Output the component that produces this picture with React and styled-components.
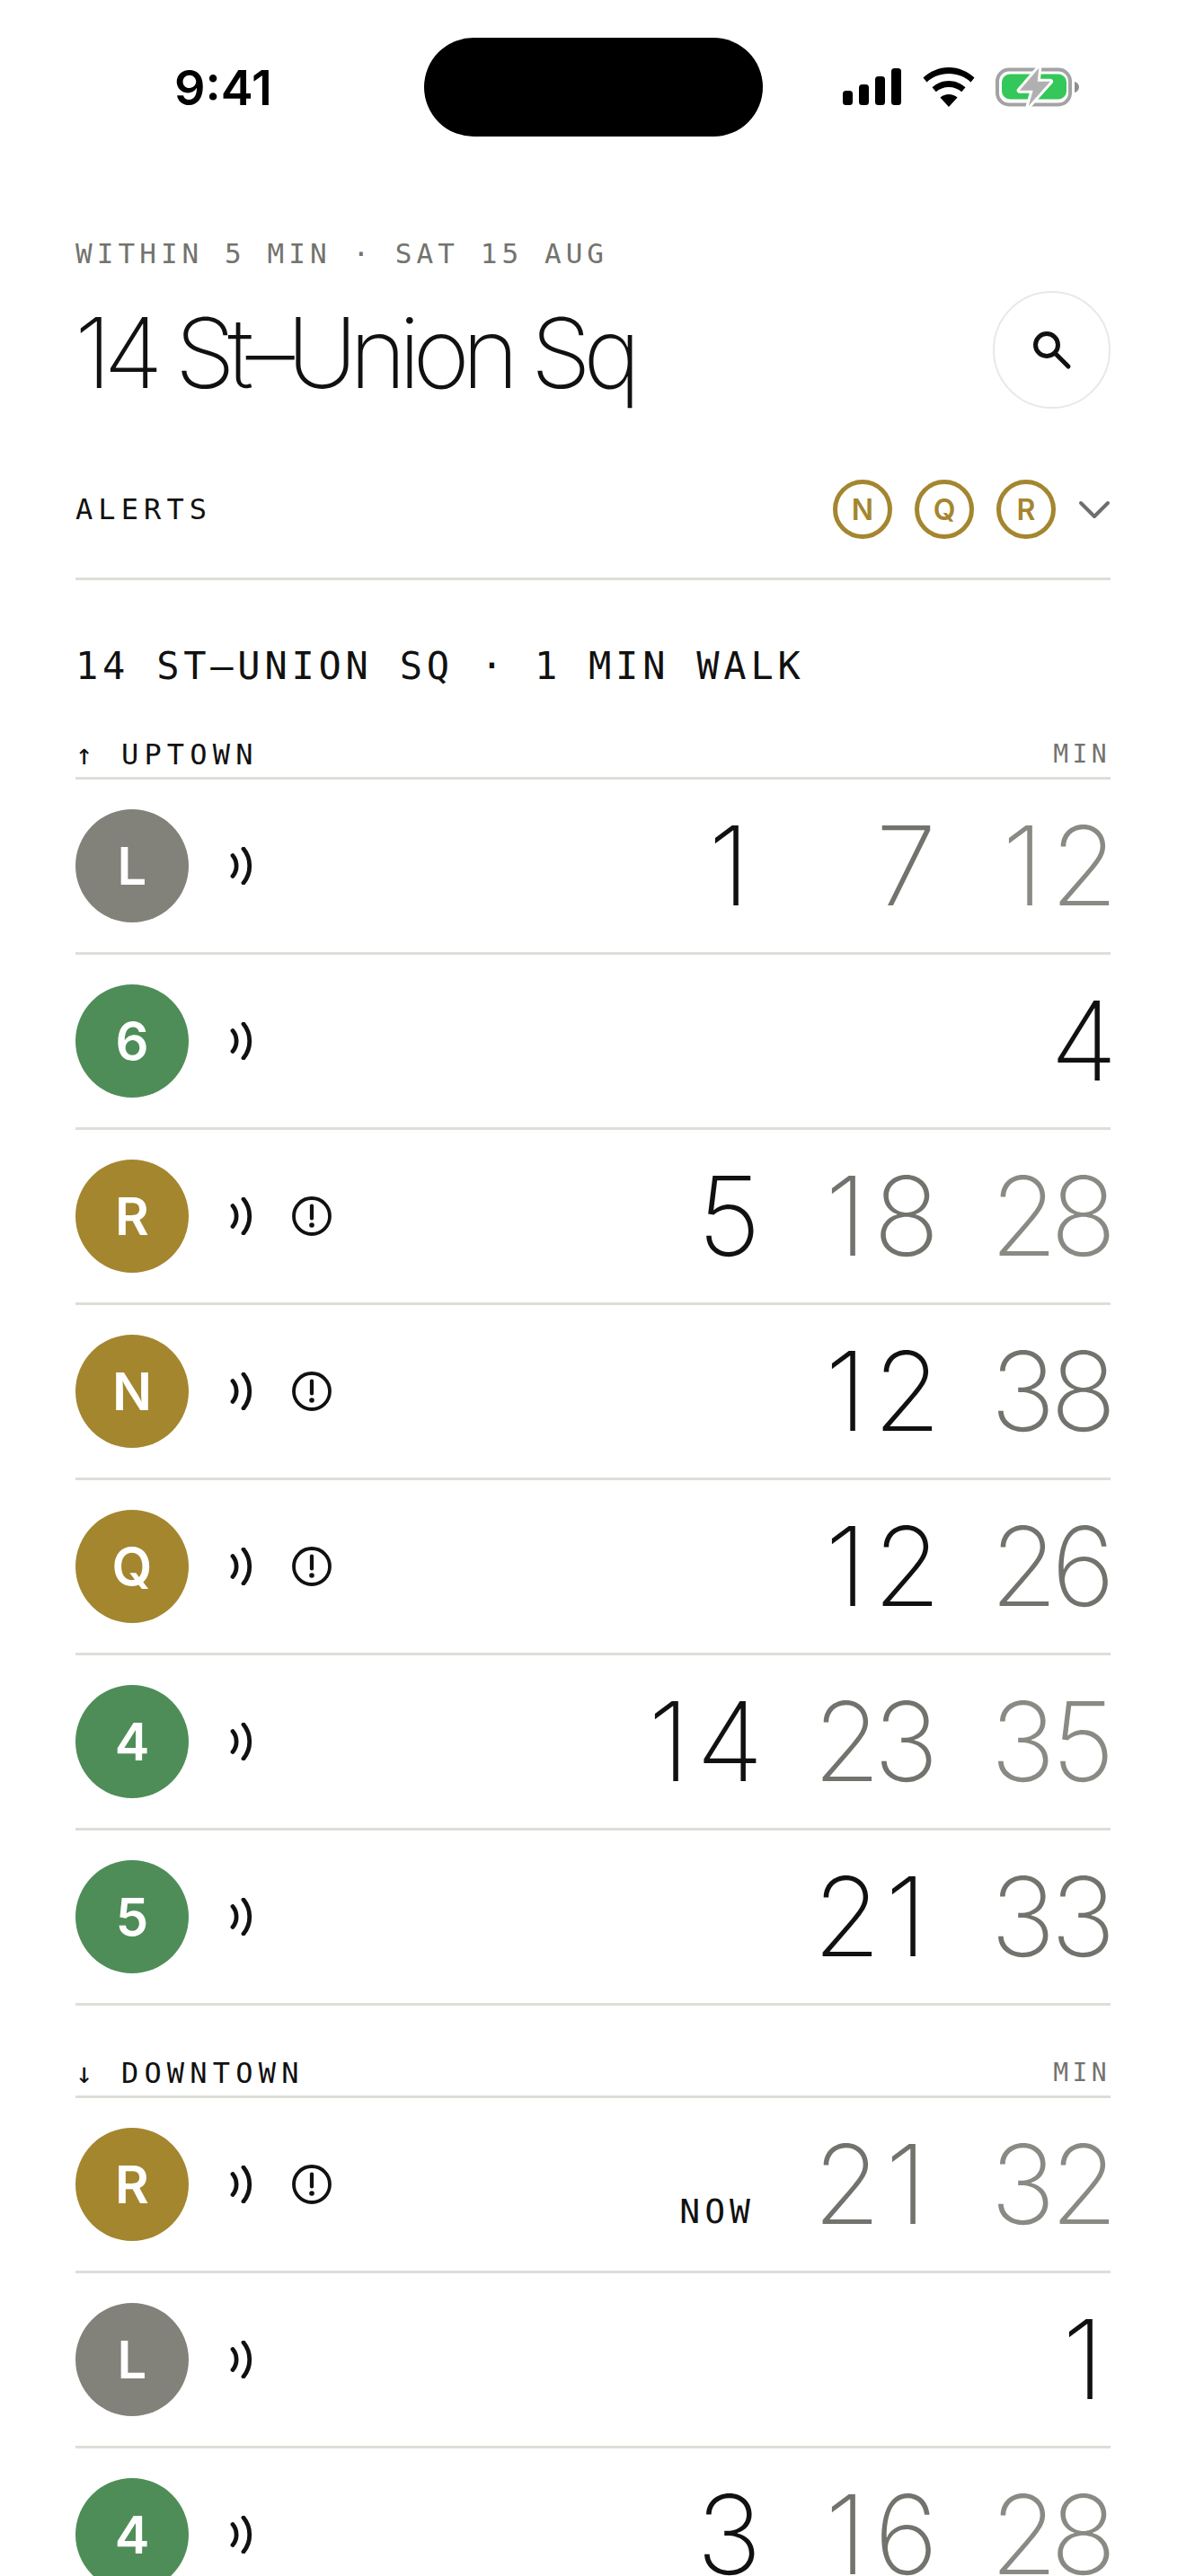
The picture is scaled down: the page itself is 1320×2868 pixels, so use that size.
import styled, { createGlobalStyle } from 'styled-components'

const GOLD = '#a4862f'
const GREEN = '#4e8d58'
const GREY = '#82827a'
const TONES = ['#111', '#73736e', '#8a8a84']

const uptown = [
  { line: 'L', color: GREY, times: ['1', '7', '12'] },
  { line: '6', color: GREEN, times: ['4'] },
  { line: 'R', color: GOLD, alert: true, times: ['5', '18', '28'] },
  { line: 'N', color: GOLD, alert: true, times: ['12', '38'] },
  { line: 'Q', color: GOLD, alert: true, times: ['12', '26'] },
  { line: '4', color: GREEN, times: ['14', '23', '35'] },
  { line: '5', color: GREEN, times: ['21', '33'] },
]

const downtown = [
  { line: 'R', color: GOLD, alert: true, times: ['NOW', '21', '32'] },
  { line: 'L', color: GREY, times: ['1'] },
  { line: '4', color: GREEN, times: ['3', '16', '28'] },
]

function Live() {
  return (
    <svg width="28" height="42" viewBox="0 0 28 42" fill="none" stroke="#111" strokeWidth="4.800" strokeLinecap="round">
      <path d="M3 9.500c5.500 6.500 5.500 16.500 0 23" />
      <path d="M15 2c9 11 9 27 0 38" />
    </svg>
  )
}

function Alert() {
  return (
    <svg width="46" height="46" viewBox="0 0 46 46" fill="none">
      <circle cx="23" cy="23" r="20" stroke="#111" strokeWidth="3.800" />
      <path d="M23 11.500v14" stroke="#111" strokeWidth="4.200" strokeLinecap="round" />
      <circle cx="23" cy="33" r="2.800" fill="#111" />
    </svg>
  )
}

function TrainRow({ train }) {
  return (
    <Row>
      <Bullet color={train.color}>{train.line}</Bullet>
      <Icons>
        <Live />
        {train.alert ? <Alert /> : null}
      </Icons>
      <Times>
        {train.times.map((time, i) => (
          time === 'NOW'
            ? <Now key={i}>NOW</Now>
            : (
              <Time key={i} color={TONES[i]}>
                {time.split('').map((digit, d) => <Digit key={d}>{digit}</Digit>)}
              </Time>
            )
        ))}
      </Times>
    </Row>
  )
}

export default function App() {
  return (
    <Screen>
      <GlobalStyle />
      <StatusBar>
        <Clock>9:41</Clock>
        <Island />
        <StatusIcons>
          <svg width="66" height="42" viewBox="0 0 66 42" fill="#000">
            <rect x="0" y="25" width="11" height="16" rx="3.500" />
            <rect x="18" y="18" width="11" height="23" rx="3.500" />
            <rect x="36" y="9" width="11" height="32" rx="3.500" />
            <rect x="54" y="0" width="11" height="41" rx="3.500" />
          </svg>
          <svg width="58" height="44" viewBox="0 0 58 44" fill="#000">
            <path d="M29 0c11 0 21 4.500 28.500 11.500l-4 5C47 10.500 38.500 7 29 7S11 10.500 4.500 16.500l-4-5C8 4.500 18 0 29 0z" />
            <path d="M29 15c7 0 13.500 2.800 18.500 7.300l-4.300 5C39.500 24 34.500 22 29 22s-10.500 2-14.200 5.300l-4.300-5C15.500 17.800 22 15 29 15z" />
            <path d="M29 30c3.600 0 7 1.300 9.600 3.600L29 44l-9.600-10.400C22 31.300 25.400 30 29 30z" />
          </svg>
          <svg width="94" height="46" viewBox="0 0 94 46" fill="none">
            <rect x="2" y="3.500" width="81" height="39" rx="13" stroke="#a3a3a3" strokeWidth="4" />
            <rect x="7" y="8.500" width="72" height="28" rx="9" fill="#34c759" />
            <path d="M88 17c3 .7 5 3 5 6s-2 5.300-5 6z" fill="#8e8e8e" />
            <path d="M48.300 1.700L26.700 26.700h15L36.700 44 61 16.700H46.700z" fill="#b0b0b0" stroke="#fff" strokeWidth="6" paintOrder="stroke" strokeLinejoin="round" />
          </svg>
        </StatusIcons>
      </StatusBar>

      <Header>
        <div>
          <Eyebrow>WITHIN 5 MIN · SAT 15 AUG</Eyebrow>
          <Title>14 St–Union Sq</Title>
        </div>
        <SearchButton>
          <svg width="46" height="46" viewBox="0 0 46 46" fill="none" stroke="#111" strokeWidth="5">
            <circle cx="17" cy="17" r="12.500" />
            <path d="M26.500 26.500L41 41" strokeLinecap="round" />
          </svg>
        </SearchButton>
      </Header>

      <Alerts>
        <AlertsLabel>ALERTS</AlertsLabel>
        <AlertBadges>
          <Badge>N</Badge>
          <Badge>Q</Badge>
          <Badge>R</Badge>
          <svg width="36" height="22" viewBox="0 0 36 22" fill="none" stroke="#6e6e6a" strokeWidth="4" strokeLinecap="round" strokeLinejoin="round">
            <path d="M3 4l15 15L33 4" />
          </svg>
        </AlertBadges>
      </Alerts>

      <Station>14 ST–UNION SQ · 1 MIN WALK</Station>

      <Direction gap="48px">
        <DirectionName>↑ UPTOWN</DirectionName>
        <MinLabel>MIN</MinLabel>
      </Direction>
      {uptown.map((train, i) => <TrainRow key={i} train={train} />)}

      <Direction gap="53px">
        <DirectionName>↓ DOWNTOWN</DirectionName>
        <MinLabel>MIN</MinLabel>
      </Direction>
      {downtown.map((train, i) => <TrainRow key={i} train={train} />)}
    </Screen>
  )
}

const GlobalStyle = createGlobalStyle`
  html, body {
    margin: 0;
    padding: 0;
    background: #fff;
  }
`
const Screen = styled.div`
  width: 1320px;
  height: 2868px;
  overflow: hidden;
  padding: 42px 84px 0;
  box-sizing: border-box;
  background: #fff;
  color: #111;
  font-family: Inter, sans-serif;
`
const StatusBar = styled.div`
  display: flex;
  align-items: center;
  height: 110px;
`
const Clock = styled.div`
  width: 388px;
  padding-left: 110px;
  box-sizing: border-box;
  font-size: 54px;
  font-weight: 600;
  color: #000;
`
const Island = styled.div`
  width: 377px;
  height: 110px;
  border-radius: 55px;
  background: #000;
`
const StatusIcons = styled.div`
  display: flex;
  align-items: center;
  gap: 23px;
  margin-left: 89px;
`
const Header = styled.div`
  display: flex;
  justify-content: space-between;
  align-items: flex-start;
  margin-top: 110px;
`
const Eyebrow = styled.div`
  font-family: "DejaVu Sans Mono", monospace;
  font-size: 31px;
  letter-spacing: 5.060px;
  color: #73736e;
  line-height: 40px;
`
const Title = styled.h1`
  margin: 36px 0 0 -1px;
  font-size: 108px;
  font-weight: 180;
  letter-spacing: -8.600px;
  line-height: 110px;
  color: #111;
`
const SearchButton = styled.div`
  display: flex;
  align-items: center;
  justify-content: center;
  width: 131px;
  height: 131px;
  margin-top: 62px;
  box-sizing: border-box;
  border: 2.500px solid #e8e8e6;
  border-radius: 50%;
`
const Alerts = styled.div`
  display: flex;
  justify-content: space-between;
  align-items: center;
  height: 145px;
  margin-top: 46px;
  padding-bottom: 10px;
  box-sizing: border-box;
  border-bottom: 3px solid #deded9;
`
const AlertsLabel = styled.div`
  font-family: "DejaVu Sans Mono", monospace;
  font-size: 32px;
  letter-spacing: 6.100px;
`
const AlertBadges = styled.div`
  display: flex;
  align-items: center;
  gap: 25px;
`
const Badge = styled.div`
  display: flex;
  align-items: center;
  justify-content: center;
  width: 66px;
  height: 66px;
  box-sizing: border-box;
  border: 5.500px solid ${GOLD};
  border-radius: 50%;
  color: ${GOLD};
  font-size: 32px;
  font-weight: 600;
`
const Station = styled.div`
  margin-top: 68px;
  font-family: "DejaVu Sans Mono", monospace;
  font-size: 42px;
  letter-spacing: 4.770px;
  line-height: 56px;
  white-space: nowrap;
`
const Direction = styled.div`
  display: flex;
  justify-content: space-between;
  align-items: flex-end;
  height: 50px;
  margin-top: ${props => props.gap};
  padding-bottom: 5px;
  box-sizing: border-box;
  border-bottom: 3px solid #deded9;
  font-family: "DejaVu Sans Mono", monospace;
  line-height: 40px;
`
const DirectionName = styled.div`
  font-size: 32px;
  letter-spacing: 6.200px;
`
const MinLabel = styled.div`
  font-size: 28px;
  letter-spacing: 4.400px;
  color: #73736e;
`
const Row = styled.div`
  display: flex;
  align-items: center;
  height: 195px;
  box-sizing: border-box;
  border-bottom: 3px solid #deded9;
`
const Bullet = styled.div`
  display: flex;
  align-items: center;
  justify-content: center;
  flex: none;
  width: 126px;
  height: 126px;
  border-radius: 50%;
  background: ${props => props.color};
  color: #fff;
  font-size: 58px;
  font-weight: 600;
`
const Icons = styled.div`
  display: flex;
  align-items: center;
  gap: 40px;
  margin-left: 46px;
`
const Times = styled.div`
  display: flex;
  justify-content: flex-end;
  margin-left: auto;
`
const Time = styled.div`
  display: flex;
  justify-content: flex-end;
  width: 197px;
  font-size: 122px;
  font-weight: 160;
  line-height: 130px;
  color: ${props => props.color};
`
const Digit = styled.span`
  width: 67px;
  text-align: center;
  letter-spacing: -6px;
`
const Now = styled.div`
  width: 197px;
  align-self: flex-end;
  padding: 0 2px 9px 0;
  box-sizing: border-box;
  text-align: right;
  font-family: "DejaVu Sans Mono", monospace;
  font-size: 38px;
  letter-spacing: 5px;
  line-height: 52px;
`
